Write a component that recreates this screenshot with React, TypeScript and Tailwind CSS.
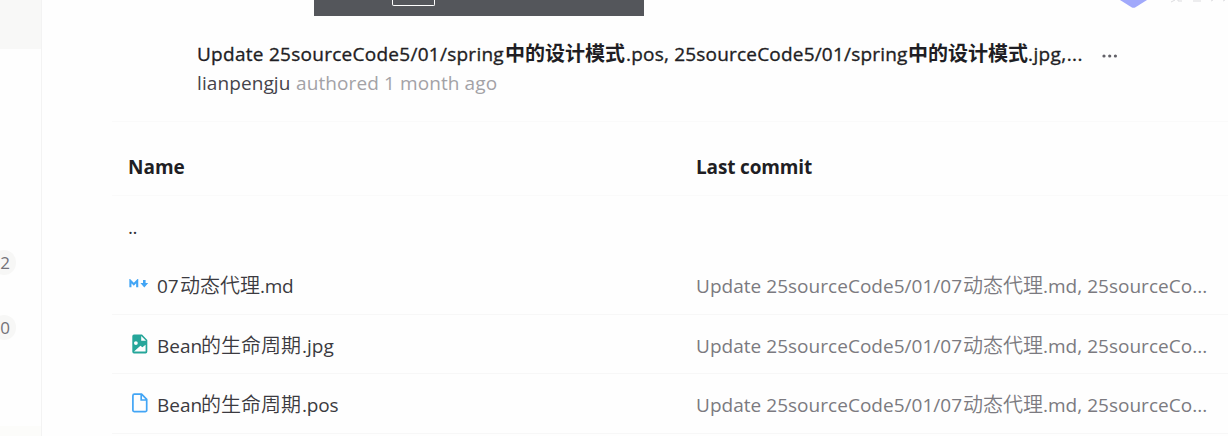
import React from "react";

const LATIN = "font-['Open_Sans','Noto_Sans_CJK_SC',sans-serif] text-[19px]";
const HAN = "font-['Noto_Sans_CJK_SC',sans-serif] text-[20px]";

function Latin({ children, className = "" }: { children: React.ReactNode; className?: string }) {
  return <span className={`${LATIN} ${className}`}>{children}</span>;
}

function Han({ children, className = "" }: { children: React.ReactNode; className?: string }) {
  return <span className={`${HAN} ${className}`}>{children}</span>;
}

function MarkdownIcon() {
  return (
    <svg width="20" height="10" viewBox="0 0 20 10" className="ml-px block">
      <path d="M1.4 8.2V1.8L4.8 5.2L8.2 1.8V8.2" fill="none" stroke="#42a5f5" strokeWidth="2.1" />
      <path d="M14 0.9H16.6V4H19.2L15.3 8.4L11.4 4H14Z" fill="#42a5f5" />
    </svg>
  );
}

function ImageIcon() {
  return (
    <svg width="16" height="20" viewBox="0 0 16 20" className="ml-[4px] block">
      <path
        fillRule="evenodd"
        fill="#26a69a"
        d="M2 0.5H10L15.3 6V17.8A1.7 1.7 0 0 1 13.6 19.5H2A1.8 1.8 0 0 1 0.3 17.8V2.3A1.8 1.8 0 0 1 2 0.5ZM9.2 2V6.8H14ZM2 17.6H13.6V10.8L10.4 13.2L8.4 11.8ZM3.9 7.2A1.9 1.9 0 1 0 3.9 11A1.9 1.9 0 1 0 3.9 7.2Z"
      />
    </svg>
  );
}

function FileIcon() {
  return (
    <svg width="16" height="20" viewBox="0 0 16 20" className="ml-[4px] block">
      <path
        d="M2.4 1.2H9.6L14.7 6.4V17.2A1.5 1.5 0 0 1 13.2 18.7H2.4A1.5 1.5 0 0 1 0.9 17.2V2.7A1.5 1.5 0 0 1 2.4 1.2ZM9.2 1.4V7H14.5"
        fill="none"
        stroke="#42a5f5"
        strokeWidth="1.7"
      />
    </svg>
  );
}

function LastCommit() {
  return (
    <div className="flex items-baseline whitespace-pre pt-[2px] text-[#7b7a80]">
      <Latin className="w-[267px] tracking-[0.03px]">Update 25sourceCode5/01/07</Latin>
      <Han className="w-20 font-[350]">动态代理</Han>
      <Latin className="tracking-[0.02px]">.md, 25sourceCo...</Latin>
    </div>
  );
}

function FileRow({ icon, children }: { icon: React.ReactNode; children: React.ReactNode }) {
  return (
    <div className="flex h-[59.6px] items-center border-b border-[#f7f7f7] pl-4">
      <div className="w-[29px] shrink-0">{icon}</div>
      <div className="flex w-[539px] shrink-0 items-baseline whitespace-pre pt-[2px] text-[#3b3a40]">{children}</div>
      <LastCommit />
    </div>
  );
}

function Count({ children }: { children: React.ReactNode }) {
  return (
    <div className="-ml-2 flex h-[25px] w-6 items-center justify-end rounded-full bg-[#f7f7f6] pr-[6px] font-['Open_Sans',sans-serif] text-[17px] text-[#737278]">
      {children}
    </div>
  );
}

export default function App() {
  return (
    <div className="relative flex h-[436px] w-[1228px] overflow-hidden bg-[#fefefe]">
      <aside className="flex w-[42px] shrink-0 flex-col border-r border-[#f3f3f3]">
        <div className="h-[49px] bg-[#f8f8f7]" />
        <div className="flex grow flex-col gap-10 pt-[201px]">
          <Count>2</Count>
          <Count>0</Count>
        </div>
        <div className="h-[10px] bg-[#fcfcfa]" />
      </aside>

      <main className="flex grow flex-col pl-[70px]">
        <section className="flex h-[122px] shrink-0 flex-col border-b border-[#fafafa] pl-[85px] pt-[38px]">
          <div className="flex h-[31px] items-baseline whitespace-pre text-[#1f1e24]">
            <Latin className="w-[308px] tracking-[0.27px] [-webkit-text-stroke:0.35px]">Update 25sourceCode5/01/spring</Latin>
            <Han className="w-[121px] font-bold">中的设计模式</Han>
            <Latin className="w-[282px] tracking-[0.2px] [-webkit-text-stroke:0.35px]">.pos, 25sourceCode5/01/spring</Latin>
            <Han className="w-[120px] font-bold">中的设计模式</Han>
            <Latin className="w-[55px] tracking-[0.4px] [-webkit-text-stroke:0.35px]">.jpg,...</Latin>
            <svg width="16" height="7" viewBox="0 0 16 7" className="ml-[19px]">
              <circle cx="2" cy="2" r="1.6" fill="#626168" />
              <circle cx="7.7" cy="2" r="1.6" fill="#626168" />
              <circle cx="13.4" cy="2" r="1.6" fill="#626168" />
            </svg>
          </div>
          <div className="flex h-[28px] items-center whitespace-pre">
            <Latin className="w-[99px] tracking-[0.1px] text-[#45434a]">lianpengju</Latin>
            <Latin className="tracking-[0.1px] text-[#a3a2a6]">authored 1 month ago</Latin>
          </div>
        </section>

        <section className="flex flex-col">
          <div className="flex h-[74px] shrink-0 items-center border-b border-[#fafafa] pl-4 pt-[18px] text-[#1f1e24]">
            <Latin className="w-[568px] font-bold">Name</Latin>
            <Latin className="font-bold tracking-[-0.15px]">Last commit</Latin>
          </div>
          <div className="flex h-[59px] shrink-0 items-center pl-4 pt-1 text-[#333238]">
            <Latin className="tracking-[-0.6px]">..</Latin>
          </div>
          <FileRow icon={<MarkdownIcon />}>
            <Latin className="w-[23px]">07</Latin>
            <Han className="w-20 font-[350]">动态代理</Han>
            <Latin className="tracking-[-0.3px]">.md</Latin>
          </FileRow>
          <FileRow icon={<ImageIcon />}>
            <Latin className="w-[44px]">Bean</Latin>
            <Han className="w-[101px] font-[350]">的生命周期</Han>
            <Latin>.jpg</Latin>
          </FileRow>
          <FileRow icon={<FileIcon />}>
            <Latin className="w-[44px]">Bean</Latin>
            <Han className="w-[101px] font-[350]">的生命周期</Han>
            <Latin className="tracking-[-0.2px]">.pos</Latin>
          </FileRow>
        </section>
      </main>

      <div className="absolute left-[314px] top-0 h-4 w-[330px] bg-[#54565b]">
        <div className="ml-[78px] h-[6px] w-[43px] rounded-b-[2px] border border-t-0 border-white" />
      </div>

      <svg className="absolute left-[1120px] top-0" width="108" height="8" viewBox="0 0 108 8">
        <path d="M0 0H27L15.5 7.2Q13.5 8.2 11.5 7.2L0 0Z" fill="#a1a9fb" />
        <path d="M51 2l4-2M58 0v1h4M73 1h8M91 1l2-1M103 1l2-1" stroke="#dcdcdf" strokeWidth="1" fill="none" />
      </svg>
    </div>
  );
}
